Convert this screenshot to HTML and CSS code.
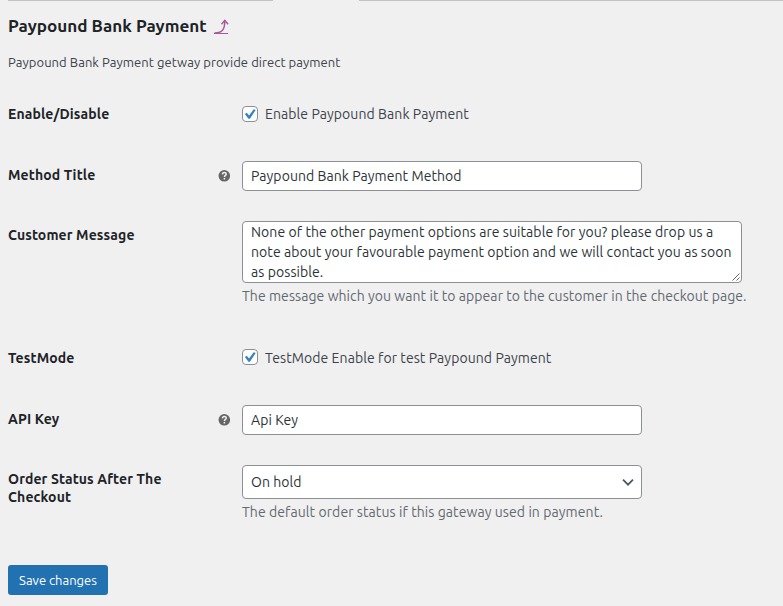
FILE: index.html
```
<!DOCTYPE html>
<html lang="en">
<head>
<meta charset="utf-8">
<title>Paypound Bank Payment</title>
<link rel="stylesheet" href="styles.css">
</head>
<body>
<div class="tabs"><span class="tab-line tab-line-left"></span><span class="tab-line"></span></div>
<main>
<h2><span class="title">Paypound Bank Payment</span>
<a class="back" href="#" aria-label="Return to payments"><svg width="16" height="17" viewBox="0 0 16 17"><path d="M.5 14C7.5 14 10.8 11.5 10.8 2M7.5 5.2L10.8 1.3L14.1 5.2" fill="none" stroke="#a8599b" stroke-width="1.5"/><path d="M0 14.5H14" stroke="#a8599b"/></svg></a></h2>
<p class="intro"><span>Paypound Bank Payment getway provide direct payment</span></p>
<form>
<div class="row row-check">
<div class="label"><span>Enable/Disable</span></div>
<label class="check"><svg class="box" width="16" height="16" viewBox="0 0 16 16"><rect x=".5" y=".5" width="15" height="15" rx="3.5" fill="#fff" stroke="#8c8f94"/><path d="M2.9 7.9L4.8 6.8L7 9.4L11.7 3.2L13.7 4.1L7.9 12.8H6.4Z" fill="#3582c4"/></svg><span>Enable Paypound Bank Payment</span></label>
</div>
<div class="row row-input">
<div class="label"><span>Method Title</span><svg class="help" width="12" height="12" viewBox="0 0 12 12"><circle cx="6.3" cy="5.8" r="5.8" fill="#666"/><path d="M4.4 4.4C4.5 1.9 8.3 2 8.2 4.2C8.1 5.6 6.5 5.3 6.4 7.1M6.4 8.1V9.5" fill="none" stroke="#f0f0f1" stroke-width="1.5"/></svg></div>
<div class="field"><span>Paypound Bank Payment Method</span></div>
</div>
<div class="row row-message">
<div class="label"><span>Customer Message</span></div>
<div>
<div class="area"><span>None of the other payment options are suitable for you? please drop us a</span><br><span>note about your favourable payment option and we will contact you as soon</span><br><span>as possible.</span><svg class="grip" width="8" height="8" viewBox="0 0 8 8"><path d="M.5 7.5L7.5 .5M4.5 7.5L7.5 4.5" stroke="#555" stroke-width=".9"/></svg></div>
<p class="desc"><span>The message which you want it to appear to the customer in the checkout page.</span></p>
</div>
</div>
<div class="row row-test">
<div class="label"><span>TestMode</span></div>
<label class="check"><svg class="box" width="16" height="16" viewBox="0 0 16 16"><rect x=".5" y=".5" width="15" height="15" rx="3.5" fill="#fff" stroke="#8c8f94"/><path d="M2.9 7.9L4.8 6.8L7 9.4L11.7 3.2L13.7 4.1L7.9 12.8H6.4Z" fill="#3582c4"/></svg><span>TestMode Enable for test Paypound Payment</span></label>
</div>
<div class="row row-input">
<div class="label"><span>API Key</span><svg class="help" width="12" height="12" viewBox="0 0 12 12"><circle cx="6.3" cy="5.8" r="5.8" fill="#666"/><path d="M4.4 4.4C4.5 1.9 8.3 2 8.2 4.2C8.1 5.6 6.5 5.3 6.4 7.1M6.4 8.1V9.5" fill="none" stroke="#f0f0f1" stroke-width="1.5"/></svg></div>
<div class="field"><span>Api Key</span></div>
</div>
<div class="row row-select">
<div class="label"><span>Order Status After The<br>Checkout</span></div>
<div>
<div class="field select"><span>On hold</span><svg width="12" height="8" viewBox="0 0 12 8"><path d="M1 1.7L6 6.7L11 1.7" fill="none" stroke="#50575e" stroke-width="1.8"/></svg></div>
<p class="desc desc-status"><span>The default order status if this gateway used in payment.</span></p>
</div>
</div>
<button type="button"><span>Save changes</span></button>
</form>
</main>
</body>
</html>
```
FILE: styles.css
```
* { box-sizing: border-box; }
body { margin: 0; background: #f0f0f1; color: #3c434a; font: 14px/20px "Ubuntu", "Noto Sans", sans-serif; letter-spacing: .065px; width: 783px; height: 606px; overflow: hidden; }
span { white-space: nowrap; }
.tabs { display: flex; justify-content: space-between; height: 1px; padding-left: 8px; }
.tab-line { width: 424px; background: #c3c4c7; }
.tab-line-left { width: 265px; }
main { padding: 0 8px; }
h2 { display: flex; align-items: center; gap: 7px; margin: 13px 0 0; height: 24px; font-size: 17.1px; line-height: 24px; letter-spacing: .01px; color: #1d2327; }
.back { display: flex; margin-top: 2px; }
.intro { margin: 14px 0 0; font-size: 13px; line-height: 20px; }
p { margin: 0; }
.row { display: grid; grid-template-columns: 234px 1fr; align-items: start; }
.row-check { height: 89px; padding-top: 32px; }
.row-input { height: 60px; }
.row-message { height: 126px; }
.row-test { height: 58px; }
.row-select { height: 100px; }
.label { display: flex; justify-content: space-between; padding-right: 12px; font-weight: 700; color: #1d2327; line-height: 18px; letter-spacing: .12px; margin-top: 5px; }
.row-check .label { margin-top: 1px; }
.row-test .label { margin-top: 2px; }
.row-test .check span { padding-top: 1px; margin-bottom: -1px; }
.help { margin-top: 4px; }
.check { display: flex; align-items: center; gap: 7px; height: 20px; letter-spacing: .08px; }
.field { display: flex; align-items: center; width: 400px; height: 30px; padding: 0 8px; border: 1px solid #8c8f94; border-radius: 4px; background: #fff; color: #2c3338; }
.select { height: 34px; justify-content: space-between; padding-right: 7px; }
.area { position: relative; width: 500px; height: 62px; padding: 0 8px; border: 1px solid #8c8f94; border-radius: 4px; background: #fff; color: #2c3338; letter-spacing: .075px; }
.grip { position: absolute; right: 1px; bottom: 1px; }
.desc { color: #646970; margin-top: 3px; }
.desc-status { letter-spacing: .08px; }
button { display: flex; align-items: center; justify-content: center; width: 100px; height: 30px; padding: 0; border: 0; border-radius: 3px; background: #2271b1; color: #fff; font: 13px/28px "Ubuntu", "Noto Sans", sans-serif; }
```
